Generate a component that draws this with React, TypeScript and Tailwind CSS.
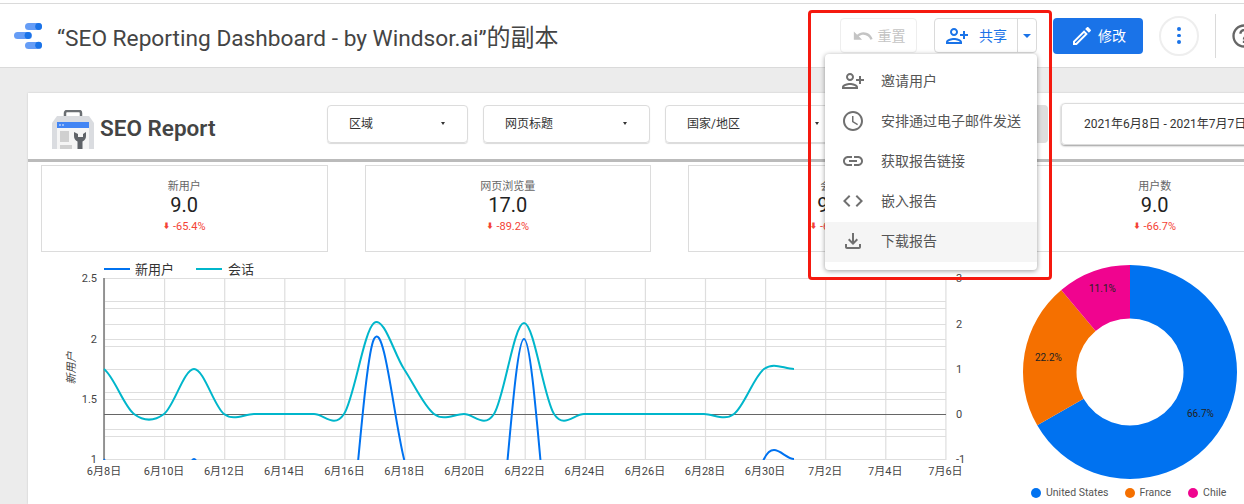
import type { ReactNode } from 'react'

const PERSON_ADD =
  'M15 12c2.21 0 4-1.79 4-4s-1.79-4-4-4-4 1.79-4 4 1.79 4 4 4zm0-6c1.1 0 2 .9 2 2s-.9 2-2 2-2-.9-2-2 .9-2 2-2zm0 8c-2.67 0-8 1.34-8 4v2h16v-2c0-2.66-5.33-4-8-4zm-6 4c.22-.72 3.31-2 6-2 2.7 0 5.8 1.29 6 2H9zm-3-3v-3h3v-2H6V7H4v3H1v2h3v3h2z'

const MENU_ITEMS = [
  {
    label: '邀请用户',
    flip: true,
    d: PERSON_ADD
  },
  {
    label: '安排通过电子邮件发送',
    d: 'M11.99 2C6.47 2 2 6.48 2 12s4.47 10 9.99 10C17.52 22 22 17.52 22 12S17.52 2 11.99 2zM12 20c-4.42 0-8-3.58-8-8s3.58-8 8-8 8 3.58 8 8-3.58 8-8 8zm.5-13H11v6l5.25 3.15.75-1.23-4.5-2.67z'
  },
  {
    label: '获取报告链接',
    d: 'M3.9 12c0-1.71 1.39-3.1 3.1-3.1h4V7H7c-2.76 0-5 2.24-5 5s2.24 5 5 5h4v-1.9H7c-1.71 0-3.1-1.39-3.1-3.1zM8 13h8v-2H8v2zm9-6h-4v1.9h4c1.71 0 3.1 1.39 3.1 3.1s-1.39 3.1-3.1 3.1h-4V17h4c2.76 0 5-2.24 5-5s-2.24-5-5-5z'
  },
  {
    label: '嵌入报告',
    d: 'M9.4 16.6L4.8 12l4.6-4.6L8 6l-6 6 6 6 1.4-1.4zm5.2 0l4.6-4.6-4.6-4.6L16 6l6 6-6 6-1.4-1.4z'
  },
  {
    label: '下载报告',
    active: true,
    d: 'M18 15v3H6v-3H4v3c0 1.1.9 2 2 2h12c1.1 0 2-.9 2-2v-3h-2zm-1-4l-1.41-1.41L13 12.17V4h-2v8.17L8.41 9.59 7 11l5 5 5-5z'
  }
]

const KPIS = [
  { label: '新用户', value: '9.0', delta: '-65.4%' },
  { label: '网页浏览量', value: '17.0', delta: '-89.2%' },
  { label: '会话', value: '9.0', delta: '-66.7%' },
  { label: '用户数', value: '9.0', delta: '-66.7%' }
]

// daily values as pixel y, read off the reference
const SESSIONS = [
  369, 414, 414, 369, 414, 414, 414, 414, 414, 323, 369, 414, 414, 414, 323,
  414, 414, 414, 414, 414, 414, 414, 369, 369
]
const NEW_USERS = [
  459, 579, 579, 459, 579, 579, 579, 579, 579, 339, 459, 579, 579, 579, 339,
  579, 579, 579, 579, 579, 579, 579, 459, 459
]

const H_LINES = [301.5, 308.5, 324.5, 339.5, 346.5, 369.5, 392.5, 399.5, 429.5, 436.5]
const X_LABELS = [
  '6月8日', '6月10日', '6月12日', '6月14日', '6月16日', '6月18日', '6月20日', '6月22日',
  '6月24日', '6月26日', '6月28日', '6月30日', '7月2日', '7月4日', '7月6日'
]
const LEFT_LABELS = [
  ['2.5', 278],
  ['2', 339],
  ['1.5', 399],
  ['1', 459]
] as const
const RIGHT_LABELS = [
  ['3', 278],
  ['2', 324],
  ['1', 369],
  ['0', 414],
  ['-1', 459]
] as const

function spline(ys: number[]) {
  const x = (i: number) => 104 + i * 30
  let d = `M${x(0)} ${ys[0]}`
  for (let i = 0; i < ys.length - 1; i++) {
    const p0 = ys[Math.max(i - 1, 0)]
    const p1 = ys[i]
    const p2 = ys[i + 1]
    const p3 = ys[Math.min(i + 2, ys.length - 1)]
    d += `C${x(i) + 10} ${p1 + (p2 - p0) / 6} ${x(i + 1) - 10} ${p2 - (p3 - p1) / 6} ${x(i + 1)} ${p2}`
  }
  return d
}

function arc(from: number, to: number) {
  const [cx, cy, R, r] = [1130, 372, 107, 53.5]
  const pt = (rad: number, t: number) => {
    const a = t * 2 * Math.PI
    return `${cx + rad * Math.sin(a)} ${cy - rad * Math.cos(a)}`
  }
  const large = to - from > 0.5 ? 1 : 0
  return `M${pt(R, from)}A${R} ${R} 0 ${large} 1 ${pt(R, to)}L${pt(r, to)}A${r} ${r} 0 ${large} 0 ${pt(r, from)}Z`
}

function Icon({ d, className }: { d: string; className?: string }) {
  return (
    <svg viewBox="0 0 24 24" className={className} fill="currentColor">
      <path d={d} />
    </svg>
  )
}

function Filter({ className, children }: { className: string; children?: ReactNode }) {
  return (
    <div
      className={`flex h-[38px] shrink-0 items-center justify-between rounded border border-[#dcdcdc] pl-[21px] pr-[22px] text-xs text-[#333] shadow-[0_1px_1px_rgba(0,0,0,0.15)] ${className}`}
    >
      <span>{children}</span>
      <span className="h-0 w-0 border-x-[2.5px] border-t-[3px] border-x-transparent border-t-[#333]" />
    </div>
  )
}

function LineChart() {
  return (
    <svg viewBox="28 252 972 252" className="h-[252px] w-[972px] shrink-0">
      <defs>
        <clipPath id="plot">
          <rect x="100" y="278" width="846" height="182" />
        </clipPath>
      </defs>
      <line x1="104" x2="130" y1="269" y2="269" stroke="#0072f0" strokeWidth="2" />
      <text x="135" y="273.5" fontSize="13" fill="#333">新用户</text>
      <line x1="196" x2="222" y1="269" y2="269" stroke="#00b6cb" strokeWidth="2" />
      <text x="228" y="273.5" fontSize="13" fill="#333">会话</text>

      <g stroke="#dedede" strokeWidth="1.2">
        <line x1="104" x2="946" y1="278.5" y2="278.5" />
        <line x1="104" x2="946" y1="459.5" y2="459.5" />
        {H_LINES.map((y) => (
          <line key={y} x1="104" x2="946" y1={y} y2={y} />
        ))}
        {X_LABELS.map((_, i) => (
          <line key={i} x1={104.5 + i * 60.1} x2={104.5 + i * 60.1} y1="278" y2="460" />
        ))}
      </g>
      <line x1="104" x2="104" y1="278" y2="460" stroke="#777" strokeWidth="1.5" />
      <line x1="104" x2="946" y1="414.5" y2="414.5" stroke="#666" />

      <g clipPath="url(#plot)" fill="none" strokeWidth="2">
        <path d={spline(NEW_USERS)} stroke="#0072f0" />
        <path d={spline(SESSIONS)} stroke="#00b6cb" />
      </g>

      <g fontSize="11" fill="#444">
        {LEFT_LABELS.map(([t, y]) => (
          <text key={t} x="97" y={y + 4} textAnchor="end">{t}</text>
        ))}
        {RIGHT_LABELS.map(([t, y]) => (
          <text key={t} x="956" y={y + 4}>{t}</text>
        ))}
        {X_LABELS.map((t, i) => (
          <text key={t} x={104 + i * 60.1} y="475" textAnchor="middle">{t}</text>
        ))}
        <text
          transform="translate(75 368) rotate(-90)"
          textAnchor="middle"
          fontStyle="italic"
        >
          新用户
        </text>
      </g>
    </svg>
  )
}

function Donut() {
  return (
    <div className="flex w-[244px] shrink-0 flex-col">
      <svg viewBox="1000 252 244 232" className="h-[232px] w-[244px]">
        <path d={arc(0, 0.667)} fill="#0072f0" />
        <path d={arc(0.667, 0.889)} fill="#f57000" />
        <path d={arc(0.889, 1)} fill="#f0048f" />
        <g fontSize="10" fill="#222">
          <text x="1187" y="417">66.7%</text>
          <text x="1035" y="361">22.2%</text>
          <text x="1089" y="292">11.1%</text>
        </g>
      </svg>
      <div className="flex items-center pl-[31px] pt-px text-[10.5px] text-[#555]">
        <span className="mr-[5px] h-2.5 w-2.5 rounded-full bg-[#0072f0]" />
        <span className="mr-[16px]">United States</span>
        <span className="mr-[5px] h-2.5 w-2.5 rounded-full bg-[#f57000]" />
        <span className="mr-[17px]">France</span>
        <span className="mr-[5px] h-2.5 w-2.5 rounded-full bg-[#f0048f]" />
        <span>Chile</span>
      </div>
    </div>
  )
}

export default function App() {
  return (
    <div className="relative flex h-[504px] w-[1244px] flex-col overflow-hidden bg-white font-['Roboto','Noto_Sans_CJK_SC',sans-serif]">
      <header className="mt-[3px] flex h-[65px] shrink-0 items-center border-y border-[#dadada]">
        <svg viewBox="14 22 29 27" className="ml-[14px] h-[27px] w-[29px] shrink-0">
          <rect x="25" y="23" width="17" height="7" rx="3.5" fill="#669df6" />
          <circle cx="38.6" cy="26.5" r="3.4" fill="#1a73e8" />
          <rect x="14" y="32" width="18" height="7" rx="3.5" fill="#669df6" />
          <circle cx="28" cy="35.5" r="3.4" fill="#1a73e8" />
          <rect x="25" y="42" width="17" height="7" rx="3.5" fill="#669df6" />
          <circle cx="38.6" cy="45.2" r="3.4" fill="#1a73e8" />
        </svg>
        <div className="ml-[14px] mt-[8px] w-[783px] shrink-0 text-[22.7px] text-[#444]">
          “SEO Reporting Dashboard - by Windsor.ai”<span className="text-2xl">的副本</span>
        </div>
        <div className="flex h-[35px] w-[77px] shrink-0 items-center justify-center gap-[4px] rounded border border-[#eee] text-sm text-[#c4c4c4]">
          <Icon
            className="h-[22px] w-[22px]"
            d="M12.5 8c-2.65 0-5.05.99-6.9 2.6L2 7v9h9l-3.62-3.62c1.39-1.16 3.16-1.88 5.12-1.88 3.54 0 6.55 2.31 7.6 5.5l2.37-.78C21.08 11.03 17.15 8 12.5 8z"
          />
          重置
        </div>
        <div className="ml-[17px] flex h-[35px] w-[103px] shrink-0 items-center rounded border border-[#dadada] text-sm text-[#1a73e8]">
          <div className="flex flex-1 items-center gap-[10px] pl-[10px]">
            <Icon className="h-6 w-6 -scale-x-100" d={PERSON_ADD} />
            共享
          </div>
          <div className="flex h-full w-[19px] items-center justify-center border-l border-[#dadada]">
            <span className="h-0 w-0 border-x-4 border-t-4 border-x-transparent border-t-[#1a73e8]" />
          </div>
        </div>
        <div className="ml-[16px] flex h-9 w-[90px] shrink-0 items-center justify-center gap-[4px] rounded bg-[#1a73e8] text-sm text-white">
          <Icon
            className="h-6 w-6"
            d="M14.06 9.02l.92.92L5.92 19H5v-.92l9.06-9.06M17.66 3c-.25 0-.51.1-.7.29l-1.83 1.83 3.75 3.75 1.83-1.83c.39-.39.39-1.02 0-1.41l-2.34-2.34c-.2-.2-.45-.29-.71-.29zm-3.6 3.19L3 17.25V21h3.75L17.81 9.94l-3.75-3.75z"
          />
          修改
        </div>
        <div className="ml-[16px] flex h-10 w-10 shrink-0 flex-col items-center justify-center gap-[3px] rounded-full border-2 border-[#eee]">
          <span className="h-[3.5px] w-[3.5px] rounded-full bg-[#1a73e8]" />
          <span className="h-[3.5px] w-[3.5px] rounded-full bg-[#1a73e8]" />
          <span className="h-[3.5px] w-[3.5px] rounded-full bg-[#1a73e8]" />
        </div>
        <div className="ml-[16px] h-[44px] w-px shrink-0 bg-[#dadada]" />
        <Icon
          className="ml-[14px] h-[28px] w-[28px] shrink-0 text-[#666]"
          d="M11 18h2v-2h-2v2zm1-16C6.48 2 2 6.48 2 12s4.48 10 10 10 10-4.48 10-10S17.52 2 12 2zm0 18c-4.41 0-8-3.59-8-8s3.59-8 8-8 8 3.59 8 8-3.59 8-8 8zm0-14c-2.21 0-4 1.79-4 4h2c0-1.1.9-2 2-2s2 .9 2 2c0 2-3 1.75-3 5h2c0-2.25 3-2.5 3-5 0-2.21-1.79-4-4-4z"
        />
      </header>

      <main className="min-h-0 flex-1 bg-[#ececec] pl-7 pt-[25px]">
        <section className="h-full w-[1320px] bg-white shadow-[0_0_2px_rgba(0,0,0,0.15)]">
          <div className="flex h-[69px] items-center border-b-[3px] border-[#bbb] pb-[5px] pl-[24px]">
            <div className="flex w-[275px] shrink-0 items-center gap-[6px] pt-[11px]">
              <svg viewBox="0 0 42 39" className="h-[39px] w-[42px] shrink-0">
                <path d="M13 6V3a2 2 0 0 1 2-2h12a2 2 0 0 1 2 2v3" fill="none" stroke="#6b6f73" strokeWidth="2.5" />
                <path d="M5 6h32l5 7v26H0V13z" fill="#dadce0" />
                <rect x="5" y="12" width="32" height="6" fill="#4285f4" />
                <circle cx="8" cy="15" r="0.8" fill="#fff" />
                <circle cx="11" cy="15" r="0.8" fill="#fff" />
                <rect x="5" y="18" width="32" height="21" fill="#f5f5f5" />
                <rect x="8" y="21" width="9" height="11" fill="#d0d0d0" />
                <rect x="8" y="35" width="12" height="4" fill="#d0d0d0" />
                <path d="M22 22v4a6 6 0 0 0 3.5 5.5V39h5v-7.5A6 6 0 0 0 34 26v-4l-3 2v3h-5v-3z" fill="#5f6368" />
              </svg>
              <span className="text-[22.5px] font-semibold text-[#444]">SEO Report</span>
            </div>
            <Filter className="w-[141px]">区域</Filter>
            <Filter className="ml-[15px] w-[167px]">网页标题</Filter>
            <Filter className="ml-[15px] w-[177px]">国家/地区</Filter>
            <div className="ml-[15px] h-[38px] w-[191px] shrink-0 rounded bg-[#dedede]" />
            <div className="ml-[13px] flex h-[42px] w-[220px] shrink-0 items-center rounded border border-[#dcdcdc] pl-[22px] text-xs text-[#333] shadow-[0_1px_2px_rgba(0,0,0,0.4)]">
              2021年6月8日 - 2021年7月7日
            </div>
          </div>

          <div className="flex gap-[37px] pl-[13px] pt-[3px]">
            {KPIS.map((k) => (
              <div
                key={k.label}
                className="flex h-[87px] w-[286.5px] shrink-0 flex-col items-center border border-[#dcdcdc] pt-[14px]"
              >
                <div className="text-[11px] leading-[13px] text-[#666]">{k.label}</div>
                <div className="text-xl leading-[25px] text-[#222]">{k.value}</div>
                <div className="mt-[2px] flex items-center gap-[3px] text-[11px] leading-[13px] text-[#f44336]">
                  <span className="text-[7px]">⬇</span>
                  {k.delta}
                </div>
              </div>
            ))}
          </div>

          <div className="flex">
            <LineChart />
            <Donut />
          </div>
        </section>
      </main>

      {/* share dropdown, open over the report */}
      <div className="absolute left-[825px] top-[54px] w-[212px] rounded bg-white py-[8px] shadow-[0_1px_5px_rgba(0,0,0,0.4)]">
        {MENU_ITEMS.map((item) => (
          <div
            key={item.label}
            className={`flex h-10 items-center pb-[2px] text-sm text-[#555] ${item.active ? 'bg-[#f5f5f5]' : ''}`}
          >
            <Icon
              className={`ml-[16px] h-6 w-6 shrink-0 text-[#707070] ${item.flip ? '-scale-x-100' : ''}`}
              d={item.d}
            />
            <span className="ml-[16px]">{item.label}</span>
          </div>
        ))}
      </div>

      {/* red annotation box from the screenshot */}
      <div className="absolute left-[808px] top-[10px] h-[270px] w-[244px] rounded-sm border-[3px] border-[#f5190f]" />
    </div>
  )
}
